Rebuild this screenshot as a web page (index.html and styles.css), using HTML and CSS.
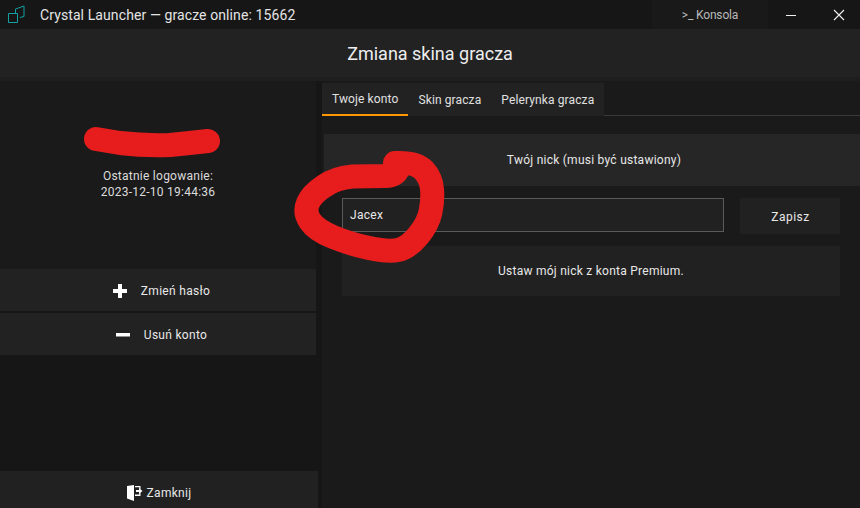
FILE: index.html
```html
<!DOCTYPE html>
<html lang="pl">
<head>
    <meta charset="UTF-8">
    <title>Crystal Launcher</title>
    <link rel="stylesheet" href="styles.css">
</head>
<body>
    <div class="window">
        <!-- pasek tytulu -->
        <div class="titlebar">
            <svg class="app-logo" width="26" height="25" viewBox="0 0 26 25" fill="none" stroke="#12a0a0" stroke-width="1">
                <path d="M2.500 11.500h9v9h-9z"/>
                <path d="M9.500 11V7L18 4v10.500l-4 1"/>
            </svg>
            <div class="app-title">Crystal Launcher — gracze online: 15662</div>
            <button class="console-btn">&gt;_ Konsola</button>
            <button class="win-btn">
                <svg width="12" height="12" viewBox="0 0 12 12" stroke="#f0f0f0" stroke-width="1"><path d="M1 6.500h10"/></svg>
            </button>
            <button class="win-btn close">
                <svg width="12" height="12" viewBox="0 0 12 12" stroke="#f0f0f0" stroke-width="1.100"><path d="M1 1l10 10M11 1L1 11"/></svg>
            </button>
        </div>

        <div class="page-header">Zmiana skina gracza</div>

        <div class="content">
            <!-- lewa kolumna -->
            <div class="sidebar">
                <div class="profile">
                    <div class="last-login">Ostatnie logowanie:<br>2023-12-10 19:44:36</div>
                </div>
                <button class="side-btn">
                    <svg width="14" height="14" viewBox="0 0 14 14" fill="#fff"><path d="M5 0h4v5h5v4H9v5H5V9H0V5h5z"/></svg>
                    <span>Zmień hasło</span>
                </button>
                <button class="side-btn">
                    <svg width="14" height="14" viewBox="0 0 14 14" fill="#fff"><path d="M0 5h14v3.500H0z"/></svg>
                    <span>Usuń konto</span>
                </button>
                <button class="close-btn">
                    <svg width="16" height="16" viewBox="0 0 16 16" fill="#fff">
                        <path d="M0 1l7-1v16l-7-2.500z"/>
                        <path d="M8 1h5.500v3h-1.200V2.200H8zM8 9.500h4.300V8h1.200v3H8z"/>
                        <path d="M9 5h3V3l3.500 3-3.500 3V7H9z"/>
                    </svg>
                    <span>Zamknij</span>
                </button>
            </div>

            <!-- prawa kolumna -->
            <div class="main">
                <div class="tabs">
                    <div class="tab active">Twoje konto</div>
                    <div class="tab">Skin gracza</div>
                    <div class="tab">Pelerynka gracza</div>
                </div>
                <div class="nick-title">Twój nick (musi być ustawiony)</div>
                <div class="nick-form">
                    <input type="text" class="nick-input" value="Jacex">
                    <button class="save-btn">Zapisz</button>
                </div>
                <button class="premium-btn">Ustaw mój nick z konta Premium.</button>
            </div>
        </div>

        <!-- czerwone zamazania na zrzucie -->
        <svg class="scribble" width="860" height="508" viewBox="0 0 860 508" fill="none" stroke="#e71d1d" stroke-width="24" stroke-linecap="round" stroke-linejoin="round">
            <path d="M96 139Q108 141 120 143Q145 146 170 145Q190 143 208 141"/>
            <path d="M395 163Q416 162 423.500 170Q431 178 432 189Q433 200 430.500 212Q428 224 418 236Q408 248 398 250Q388 252 369 248Q350 244 333 237Q316 230 310 221Q304 212 308 203Q312 194 323.500 186.500Q335 178 352.500 176.500Q370 176 385 176Q398 176 398 166"/>
        </svg>
    </div>
</body>
</html>
```

FILE: styles.css
```css
* {
    margin: 0;
    padding: 0;
    box-sizing: border-box;
}

body {
    width: 860px;
    height: 508px;
    font-family: Roboto, "Liberation Sans", sans-serif;
    background: #1a1a1a;
    color: #e8e8e8;
    overflow: hidden;
}

button, input {
    font-family: inherit;
    color: inherit;
    border: none;
    outline: none;
}

.window {
    position: relative;
    height: 100%;
    display: flex;
    flex-direction: column;
}

.titlebar {
    height: 29px;
    display: flex;
    align-items: center;
    background: #161616;
}

.app-logo {
    margin-left: 6px;
    flex-shrink: 0;
}

.app-title {
    flex: 1;
    margin-left: 8px;
    font-size: 14px;
    letter-spacing: 0.1px;
    color: #e4e4e4;
}

.console-btn {
    width: 116px;
    height: 29px;
    background: #191919;
    font-size: 12px;
    letter-spacing: -0.15px;
    color: #b8b8b8;
}

.win-btn {
    width: 46px;
    height: 29px;
    background: none;
    display: flex;
    align-items: center;
    justify-content: center;
}

.win-btn.close {
    padding-left: 4px;
}

.win-btn svg {
    display: block;
}

.page-header {
    height: 48px;
    display: flex;
    align-items: center;
    justify-content: center;
    background: #222;
    font-size: 18px;
    color: #eee;
}

.content {
    flex: 1;
    display: flex;
    border-top: 4px solid #1e1e1e;
    background: #161616;
}

.sidebar {
    width: 322px;
    display: flex;
    flex-direction: column;
    flex-shrink: 0;
    background: #161616;
}

.profile {
    height: 188px;
    width: 316px;
    padding-top: 87px;
    background: #1a1a1a;
}

.last-login {
    font-size: 12px;
    line-height: 16px;
    letter-spacing: 0.25px;
    text-align: center;
    color: #dcdcdc;
}

.side-btn {
    width: 316px;
    height: 42px;
    margin-bottom: 2px;
    padding: 2px 0 0 7px;
    display: flex;
    align-items: center;
    justify-content: center;
    gap: 14px;
    background: #222;
    font-size: 12px;
    letter-spacing: 0.3px;
}

.close-btn {
    width: 318px;
    height: 37px;
    margin-top: auto;
    padding-top: 6px;
    display: flex;
    align-items: center;
    justify-content: center;
    gap: 4px;
    background: #212121;
    font-size: 12px;
    letter-spacing: 0.3px;
}

.main {
    flex: 1;
    padding-top: 2px;
    background: #1a1a1a;
}

.tabs {
    height: 33px;
    display: flex;
    border-bottom: 1px solid #3a3a3a;
}

.tab {
    height: 33px;
    padding: 1px 10px 0;
    display: flex;
    align-items: center;
    background: #222;
    font-size: 12px;
    letter-spacing: 0.12px;
    color: #e0e0e0;
}

.tab.active {
    border-bottom: 2px solid #ff9800;
}

.nick-title {
    height: 52px;
    margin: 18px 0 12px 2px;
    padding-left: 4px;
    display: flex;
    align-items: center;
    justify-content: center;
    background: #262626;
    font-size: 12px;
    letter-spacing: 0.25px;
}

.nick-form {
    display: flex;
    align-items: flex-start;
    gap: 16px;
    margin-left: 20px;
    margin-right: 20px;
}

.nick-input {
    width: 382px;
    height: 34px;
    padding: 0 7px;
    background: #212121;
    border: 1px solid #5a5a5a;
    font-size: 12px;
    letter-spacing: 0.3px;
}

.save-btn {
    width: 100px;
    height: 36px;
    padding: 1px 0 0 1px;
    background: #212121;
    font-size: 12px;
    letter-spacing: 0.5px;
}

.premium-btn {
    display: block;
    width: 498px;
    height: 50px;
    margin: 12px 0 0 20px;
    background: #212121;
    font-size: 12px;
    letter-spacing: 0.25px;
}

.scribble {
    position: absolute;
    top: 0;
    left: 0;
    pointer-events: none;
}
```
